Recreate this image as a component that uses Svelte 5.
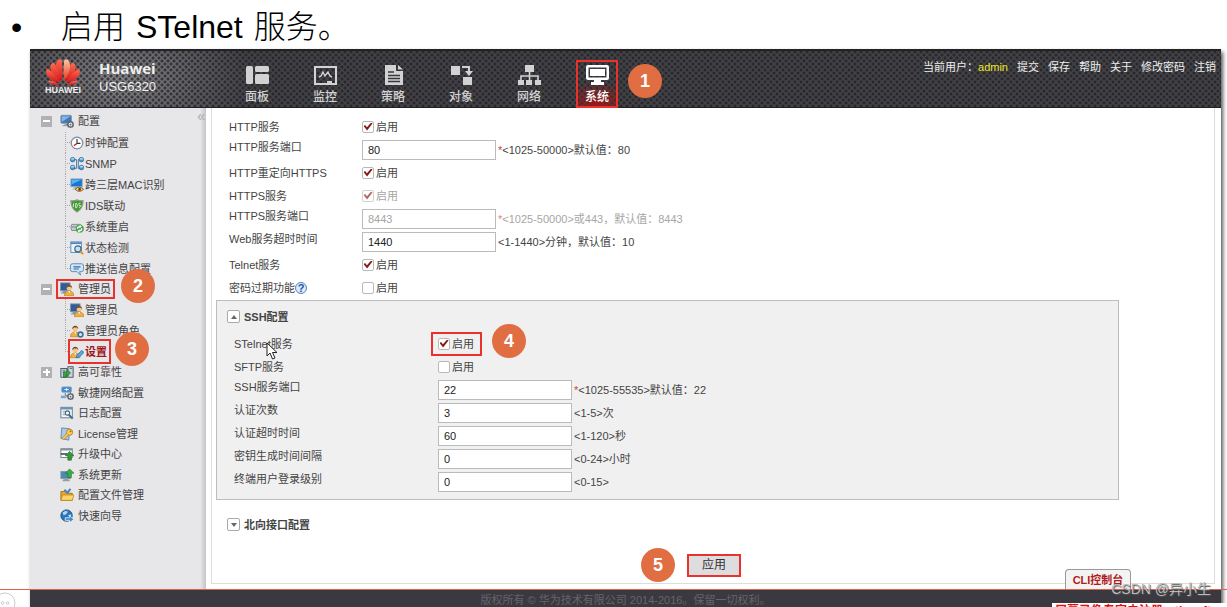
<script lang="ts">
  type Leaf = { label: string; icon: string; step?: number };
  type Node = Leaf & { open?: boolean; children?: Leaf[] };
  type Field = {
    id: string;
    label: string;
    kind: 'check' | 'text';
    value?: string;
    checked?: boolean;
    disabled?: boolean;
    required?: boolean;
    hint?: string;
    help?: boolean;
    cursor?: boolean;
    step?: number;
  };

  const nav: Leaf[] = [
    { label: '面板', icon: 'dashboard' },
    { label: '监控', icon: 'monitor' },
    { label: '策略', icon: 'policy' },
    { label: '对象', icon: 'object' },
    { label: '网络', icon: 'network' },
    { label: '系统', icon: 'system', step: 1 },
  ];

  const userLinks = ['提交', '保存', '帮助', '关于', '修改密码', '注销'];

  const tree: Node[] = [
    {
      label: '配置', icon: 'config', open: true,
      children: [
        { label: '时钟配置', icon: 'clock' },
        { label: 'SNMP', icon: 'snmp' },
        { label: '跨三层MAC识别', icon: 'mac' },
        { label: 'IDS联动', icon: 'shield' },
        { label: '系统重启', icon: 'restart' },
        { label: '状态检测', icon: 'inspect' },
        { label: '推送信息配置', icon: 'message' },
      ],
    },
    {
      label: '管理员', icon: 'admin', open: true, step: 2,
      children: [
        { label: '管理员', icon: 'admin' },
        { label: '管理员角色', icon: 'role' },
        { label: '设置', icon: 'settings', step: 3 },
      ],
    },
  ];

  const rest: Node[] = [
    { label: '高可靠性', icon: 'ha', open: false },
    { label: '敏捷网络配置', icon: 'agile' },
    { label: '日志配置', icon: 'log' },
    { label: 'License管理', icon: 'license' },
    { label: '升级中心', icon: 'upgrade' },
    { label: '系统更新', icon: 'update' },
    { label: '配置文件管理', icon: 'folder' },
    { label: '快速向导', icon: 'wizard' },
  ];

  const webFields: Field[] = [
    { id: 'http', label: 'HTTP服务', kind: 'check', checked: true },
    { id: 'http-port', label: 'HTTP服务端口', kind: 'text', value: '80', required: true, hint: '<1025-50000>默认值：80' },
    { id: 'redirect', label: 'HTTP重定向HTTPS', kind: 'check', checked: true },
    { id: 'https', label: 'HTTPS服务', kind: 'check', checked: true, disabled: true },
    { id: 'https-port', label: 'HTTPS服务端口', kind: 'text', value: '8443', disabled: true, required: true, hint: '<1025-50000>或443，默认值：8443' },
    { id: 'web-timeout', label: 'Web服务超时时间', kind: 'text', value: '1440', hint: '<1-1440>分钟，默认值：10' },
    { id: 'telnet', label: 'Telnet服务', kind: 'check', checked: true },
    { id: 'pwd-expire', label: '密码过期功能', kind: 'check', help: true },
  ];

  const sshFields: Field[] = [
    { id: 'stelnet', label: 'STelnet服务', kind: 'check', checked: true, cursor: true, step: 4 },
    { id: 'sftp', label: 'SFTP服务', kind: 'check' },
    { id: 'ssh-port', label: 'SSH服务端口', kind: 'text', value: '22', required: true, hint: '<1025-55535>默认值：22' },
    { id: 'auth-retry', label: '认证次数', kind: 'text', value: '3', hint: '<1-5>次' },
    { id: 'auth-timeout', label: '认证超时时间', kind: 'text', value: '60', hint: '<1-120>秒' },
    { id: 'key-interval', label: '密钥生成时间间隔', kind: 'text', value: '0', hint: '<0-24>小时' },
    { id: 'user-level', label: '终端用户登录级别', kind: 'text', value: '0', hint: '<0-15>' },
  ];
</script>

{#snippet badge(n: number)}
  <span class="badge">{n}</span>
{/snippet}

{#snippet navIcon(name: string)}
  <svg class="nav-icon" viewBox="0 0 24 22" fill="currentColor" aria-hidden="true">
    {#if name === 'dashboard'}
      <rect x="1" y="2" width="7" height="18" rx="1.5" />
      <rect x="10" y="2" width="14" height="6" rx="1.5" />
      <rect x="10" y="10" width="14" height="10" rx="1.5" />
    {:else if name === 'monitor'}
      <path d="M1 2h23v19H1zM3 4v15h11v-2h5v2h3V4z" fill-rule="evenodd" />
      <path d="M6 13l2-1 2-4 2 4 3-4 2 4 2 1" fill="none" stroke="currentColor" stroke-width="1.4" />
    {:else if name === 'policy'}
      <path d="M4 1h11v6h7v14H4z" />
      <path d="M17 1l5 4.500h-5z" />
      <path d="M7 8h6M7 11.500h12M7 14.500h12M7 17.500h12" stroke="#38373c" stroke-width="1.3" />
    {:else if name === 'object'}
      <rect x="2" y="2" width="9" height="9" />
      <rect x="14" y="13" width="9" height="8" />
      <path d="M13 3h7v5" fill="none" stroke="currentColor" stroke-width="2" />
      <path d="M16 7h8l-4 5z" />
    {:else if name === 'network'}
      <rect x="8" y="1" width="9" height="7" />
      <rect x="1" y="16" width="6" height="5" />
      <rect x="9" y="16" width="6" height="5" />
      <rect x="18" y="16" width="6" height="5" />
      <path d="M12.500 8v8M4 16v-4h17v4" fill="none" stroke="currentColor" stroke-width="1.6" />
    {:else}
      <path d="M3 1h19q2 0 2 2v11q0 2-2 2H3q-2 0-2-2V3q0-2 2-2zM3.500 3.500v10h18v-10z" fill-rule="evenodd" />
      <path d="M5 5h15v7H5zM9 16h7v2h3v3H6v-3h3z" />
    {/if}
  </svg>
{/snippet}

{#snippet person()}
  <circle cx="9" cy="6" r="3" fill="#f5c48d" />
  <path d="M5.600 6.500C5 1.500 12.500 1 12.500 6.500L11 4.500H7.500z" fill="#7a4514" />
  <path d="M3.500 15q0-5 5.500-5.500 5.500.5 5.500 5.500z" fill="#edb23c" stroke="#b37718" stroke-width=".7" />
  <path d="M8 9.500l1 2.500 1-2.500z" fill="#fff" />
{/snippet}

{#snippet pc()}
  <rect x="1" y="1.500" width="12" height="9" rx="1" fill="#3f78b5" stroke="#7c93a8" />
  <path d="M2 2.500h10L2 9z" fill="#82b5e6" />
  <path d="M5 11h4v1.500h2V14H3v-1.500h2z" fill="#9aa5b0" />
{/snippet}

{#snippet gear()}
  <circle cx="12" cy="12" r="3" fill="#e5e8eb" stroke="#59636c" stroke-width="1.500" />
  <path d="M12 7.500v1.500M12 15v1M7.500 12H9M15 12h1M9 9l1 1M14 14l1 1M15 9l-1 1M9 15l1-1" stroke="#59636c" stroke-width="1.300" />
  <circle cx="12" cy="12" r="1" fill="#59636c" />
{/snippet}

{#snippet treeIcon(name: string)}
  <svg class="tree-icon" viewBox="0 0 16 16" aria-hidden="true">
    {#if name === 'config'}
      {@render pc()}
      {@render gear()}
    {:else if name === 'clock'}
      <circle cx="8" cy="8" r="6.600" fill="#fff" stroke="#7f8ca3" stroke-width="1.400" />
      <path d="M8 3.500V8.500H12" fill="none" stroke="#333" stroke-width="1.300" />
      <path d="M8 8.500L4.500 11" stroke="#c22" stroke-width="1.500" />
    {:else if name === 'snmp'}
      <path d="M4 3h3.500v10H4M12 3H9.500v10H12" fill="none" stroke="#456f96" />
      {#each [[3, 3], [3, 12], [13, 3], [13, 12]] as [cx, cy]}
        <rect x={cx - 2.5} y={cy - 2.5} width="5" height="5" rx="2" fill="#4593ce" stroke="#225c8e" stroke-width=".7" />
        <ellipse {cx} cy={cy - 1} rx="2" ry="1" fill="#afdaf6" />
      {/each}
    {:else if name === 'mac'}
      <rect x="1" y="1" width="13" height="9" fill="#1777d2" stroke="#9badbe" />
      <path d="M2 2h11L2 7z" fill="#59b2f5" />
      <path d="M5 10h4v3H3v-1h2z" fill="#a4abb2" />
      <path d="M6 13q4.500-5 9.500 0-5 4.500-9.500 0z" fill="#f3d68d" stroke="#7a4d16" />
      <circle cx="11" cy="13" r="1.500" fill="#5b330c" />
    {:else if name === 'shield'}
      <path d="M8 1q3 1.500 7 1-.3 9-7 13-6.700-4-7-13 4 .5 7-1z" fill="#3f9a2e" stroke="#909a8b" stroke-width="1.300" />
      <path d="M4 5v4M6.500 5v5h1q2-2.500 0-5zM12 5q-2-1-2 1t2 1.500-2 2.500" fill="none" stroke="#e6f5df" />
    {:else if name === 'restart'}
      <path d="M2 5h10l3 3v4H2q-2-3 0-7z" fill="#c8ccd0" stroke="#7c8489" />
      <path d="M2 8h5" stroke="#70787e" />
      <circle cx="11" cy="10" r="4.500" fill="#48a547" />
      <path d="M8.500 10q0-2.500 3-2.500M13.500 9.500q0 3-3 3" fill="none" stroke="#fff" stroke-width="1.400" />
      <path d="M11 5.500l2.500 2-2.500 2zM11 10.500l-2.500 2 2.500 2z" fill="#fff" />
    {:else if name === 'inspect'}
      <rect x="1" y="1" width="12" height="12" fill="#eef6fe" stroke="#4d83bd" />
      <path d="M1 2.500h12" stroke="#4d83bd" stroke-width="2" />
      <circle cx="9" cy="9" r="3.500" fill="#bfe2f7" stroke="#47637e" stroke-width="1.300" />
      <path d="M11.500 11.500L15 15" stroke="#d59420" stroke-width="2.200" />
    {:else if name === 'message'}
      <path d="M3 2h10q2.500 0 2.500 2.500v4Q15.500 11 13 11h-2l1 4-4-4H3Q.5 11 .5 8.500v-4Q.5 2 3 2z" fill="#cfe6f8" stroke="#5482ad" />
      <path d="M4 5.500h8M4 8h6" stroke="#356b9f" stroke-width="1.300" />
    {:else if name === 'admin'}
      <rect x="0.500" y="1" width="11" height="9" fill="#2f5b99" stroke="#8195aa" />
      <path d="M3 10h4v3H1v-1h2z" fill="#8795a3" />
      <g transform="translate(1.500 .8)">{@render person()}</g>
    {:else if name === 'role'}
      <g transform="translate(-3 -.5)">{@render person()}</g>
      <circle cx="12" cy="12" r="2.700" fill="#d4e9f8" stroke="#35719f" stroke-width="1.800" />
    {:else if name === 'settings'}
      <g transform="translate(-3 -.5)">{@render person()}</g>
      <path d="M7 14.500l1-3L13.500 6 16 8.500 10.500 14z" fill="#58a5dc" stroke="#28689c" stroke-width=".8" />
    {:else if name === 'ha'}
      <rect x="1" y="4" width="7" height="10" fill="#cbd4dd" stroke="#394d63" />
      <rect x="9" y="2" width="6" height="12" fill="#cbd4dd" stroke="#394d63" />
      <path d="M3 6h3M3 8h3M11 4h3" stroke="#53697e" />
      <path d="M4 14V8h4V5l4 4-4 4v-2H7v3z" fill="#3ca23a" stroke="#176a1d" stroke-width=".7" />
    {:else if name === 'agile'}
      <rect x="2" y="1" width="11" height="6" rx="1" fill="#3f89d1" stroke="#86a1ba" />
      <path d="M5 4h5M7.500 2.500v3" stroke="#fff" />
      <path d="M6 8v3h4M2 13h5" stroke="#577086" fill="none" />
      <rect x="1" y="11" width="5" height="3" fill="#71a7d6" />
      {@render gear()}
    {:else if name === 'log'}
      <rect x="1" y="1.500" width="13" height="12" fill="#f3f8fc" stroke="#58718a" />
      <path d="M1 3h13" stroke="#7091ae" stroke-width="2" />
      <path d="M3 6h3M3 8h2M3 10h3" stroke="#8fa1b2" />
      <circle cx="8.500" cy="8" r="2.500" fill="none" stroke="#45687f" stroke-width="1.300" />
      <path d="M10 10l4.500 4.500" stroke="#45687f" stroke-width="2.200" />
    {:else if name === 'license'}
      <path d="M2 1l9 1-1 13-9-2z" fill="#a7c9ec" stroke="#5c86b5" />
      <circle cx="11" cy="6" r="3.500" fill="#ffd155" stroke="#bb7f13" />
      <path d="M9 8l-6 6" stroke="#c98918" stroke-width="3.500" />
      <path d="M9 8l-5.500 5.500" stroke="#ffd155" stroke-width="1.800" />
      <circle cx="12" cy="5" r="1" fill="#91600d" />
    {:else if name === 'upgrade'}
      <rect x="1" y="2" width="13" height="10" fill="#fff" stroke="#697984" />
      <path d="M1 3h13" stroke="#81929d" stroke-width="2" />
      <path d="M1 8h7" stroke="#222" stroke-width="1.500" />
      <path d="M11 5l5 5h-3v5H9v-5H6z" fill="#2e9a3b" stroke="#17651f" stroke-width=".7" />
    {:else if name === 'update'}
      <rect x="1" y="4" width="11" height="8" fill="#4d89b6" stroke="#84949f" />
      <path d="M5 12h4v1h2v2H3v-2h2z" fill="#929da5" />
      <path d="M11 1l5 5h-3v5H9V6H6z" fill="#3bac4b" stroke="#1c762b" stroke-width=".7" />
    {:else if name === 'folder'}
      <path d="M1 4h5l1 2h7v8H1z" fill="#e9a72a" stroke="#a66f0e" />
      <path d="M5 2l4 4M12 1L8 6" stroke="#4889bf" stroke-width="2.400" />
      <path d="M1 14l2-6h13l-2 6z" fill="#ffd469" stroke="#bc8018" stroke-width=".8" />
    {:else}
      <circle cx="7.500" cy="7.500" r="6.500" fill="#2b75ba" stroke="#174b82" />
      <path d="M3 4q3-3 6-1l-2 3-3 1zM9 7l4-1-1 4z" fill="#b2daf4" />
      <path d="M6 10h5V7.500l5 4.500-5 3.500V13H6z" fill="#408dc9" stroke="#fff" stroke-width=".8" />
    {/if}
  </svg>
{/snippet}

{#snippet branch(node: Node)}
  <div class="head">
    {#if node.open !== undefined}
      <button class="toggle" class:plus={!node.open} aria-label={node.label}></button>
    {:else}
      <span class="toggle-space"></span>
    {/if}
    <a href="#top" class:boxed={node.step}>
      {@render treeIcon(node.icon)}<span>{node.label}</span>
      {#if node.step}{@render badge(node.step)}{/if}
    </a>
  </div>
{/snippet}

{#snippet row(f: Field)}
  <div class="row" class:disabled={f.disabled}>
    <label class="name" class:raised={f.kind === 'text'} for={f.id}>
      {f.label}
      {#if f.help}<span class="help">?</span>{/if}
      {#if f.cursor}
        <svg class="cursor" viewBox="0 0 12 18" aria-hidden="true">
          <path d="M1 1v13l3-3 2.500 6 2.500-1-2.500-5.500H11z" fill="#fff" stroke="#222" />
        </svg>
      {/if}
    </label>
    {#if f.kind === 'check'}
      <label class="check" class:boxed={f.step}>
        <input id={f.id} type="checkbox" checked={f.checked} disabled={f.disabled} />启用
        {#if f.step}{@render badge(f.step)}{/if}
      </label>
    {:else}
      <input id={f.id} class="text" type="text" value={f.value} disabled={f.disabled} />
      <span class="hint">{#if f.required}<i>*</i>{/if}{f.hint}</span>
    {/if}
  </div>
{/snippet}

<div class="page" id="top">
  <h1>
    <span class="dot">•</span>
    <span>启用</span>
    <span>STelnet</span>
    <span>服务。</span>
  </h1>

  <div class="app">
    <header>
      <div class="brand">
        <div class="logo">
          <svg viewBox="0 0 36 28" aria-hidden="true">
            <defs>
              <linearGradient id="petal" x1="0" y1="0" x2="0" y2="1">
                <stop offset="0" stop-color="#ff6a50" />
                <stop offset="1" stop-color="#d3141a" />
              </linearGradient>
              <linearGradient id="shine" x1="0" y1="0" x2="0" y2="1">
                <stop offset="0" stop-color="#ffc9a4" />
                <stop offset="1" stop-color="#e4331f" />
              </linearGradient>
            </defs>
            <g fill="url(#petal)">
              <path d="M17 23C11 15 9 6 13 2q3-2 4 1 1 9 0 20z" />
              <path d="M16 24C7 18 4 12 6 6q2-2 4 0 4 8 6 18z" />
              <path d="M15 25Q2 22 1 14q0-3 2-3 7 4 12 14z" />
              <path d="M14 26.500q-8 2-11-3.500 5-1 11 3.500z" />
              <path d="M20 24c9-6 12-12 10-18q-2-2-4 0-4 8-6 18z" />
              <path d="M21 25q13-3 14-11 0-3-2-3-7 4-12 14z" />
              <path d="M22 26.500q8 2 11-3.500-5-1-11 3.500z" />
            </g>
            <path d="M19 23c6-8 8-17 4-21q-3-2-4 1-1 9 0 20z" fill="url(#shine)" />
          </svg>
          <span>HUAWEI</span>
        </div>
        <div class="product">
          <strong>Huawei</strong>
          <span>USG6320</span>
        </div>
      </div>
      <nav class="main-nav">
        {#each nav as item}
          <a href="#top" class:boxed={item.step} class:active={item.step}>
            {@render navIcon(item.icon)}
            <span>{item.label}</span>
            {#if item.step}{@render badge(item.step)}{/if}
          </a>
        {/each}
      </nav>
      <div class="user">
        <span>当前用户：<b>admin</b></span>
        {#each userLinks as link}<a href="#top">{link}</a>{/each}
      </div>
    </header>

    <div class="body">
      <aside>
        <button class="collapse" aria-label="collapse">«</button>
        {#each tree as node}
          {@render branch(node)}
          <ul>
            {#each node.children ?? [] as leaf}
              <li>
                <a href="#top" class:boxed={leaf.step} class:current={leaf.step}>
                  {@render treeIcon(leaf.icon)}<span>{leaf.label}</span>
                  {#if leaf.step}{@render badge(leaf.step)}{/if}
                </a>
              </li>
            {/each}
          </ul>
        {/each}
        <div class="rest">
          {#each rest as node}{@render branch(node)}{/each}
        </div>
      </aside>

      <main>
        <div class="panel">
          <div class="web">
            {#each webFields as f}{@render row(f)}{/each}
          </div>
          <section class="open">
            <h2><button class="fold up" aria-label="SSH配置"></button>SSH配置</h2>
            {#each sshFields as f}{@render row(f)}{/each}
          </section>
          <section class="closed">
            <h2><button class="fold" aria-label="北向接口配置"></button>北向接口配置</h2>
          </section>
          <div class="actions">
            {@render badge(5)}
            <button class="apply boxed">应用</button>
          </div>
        </div>
        <button class="cli">CLI控制台</button>
      </main>
    </div>

    <footer>版权所有 © 华为技术有限公司 2014-2016。保留一切权利。</footer>
  </div>

  <div class="rule"></div>
  <svg class="more" viewBox="0 0 16 16" aria-hidden="true">
    <circle cx="5" cy="12" r="10" fill="none" stroke="#ccc" />
    <g fill="none" stroke="#ccc"><circle cx="2.500" cy="12" r="1.300" /><circle cx="7.500" cy="12" r="1.300" /></g>
  </svg>
  <div class="recorder">屏幕录像专家未注册，tlxsoft.com</div>
  <div class="watermark">CSDN @异小生</div>
</div>

<style>
  :global(body) { background: #fff; }
  .page {
    position: relative;
    overflow: hidden;
    font-family: "Liberation Sans", "Noto Sans CJK SC", sans-serif;
    font-size: 11px;
    line-height: 16px;
    color: #444;
  }
  a { color: inherit; text-decoration: none; }
  button, input { font: inherit; margin: 0; padding: 0; }
  h1 {
    display: flex;
    gap: 11px;
    margin: 0;
    padding-left: 11px;
    height: 49px;
    line-height: 54px;
    font-size: 32px;
    font-weight: 300;
    color: #000;
  }
  .dot { width: 39px; }
  .app { margin: 0 6px 0 30px; box-shadow: 2px 3px 4px #555; }

  .badge {
    display: block;
    flex: none;
    width: 34px;
    height: 34px;
    border-radius: 50%;
    background: #e16e43;
    color: #fff;
    font-size: 18px;
    font-weight: bold;
    line-height: 34px;
    text-align: center;
  }
  a .badge, .check .badge {
    position: absolute;
    z-index: 2;
    left: 100%;
    top: 50%;
    margin: -20px 0 0 10px;
  }
  aside a .badge { margin-left: 6px; }
  .boxed { position: relative; outline: 2px solid #e8322b; outline-offset: -2px; }

  header {
    display: flex;
    height: 59px;
    color: #eee;
    background:
      radial-gradient(circle, rgb(30 29 33 / 0.7) 1px, transparent 2px) 0 0 / 6px 6px,
      radial-gradient(circle, rgb(30 29 33 / 0.7) 1px, transparent 2px) 3px 3px / 6px 6px,
      radial-gradient(ellipse 130px 80px at 90px 30px, #858588, #434247);
    box-shadow: inset 0 2px 1px #222, inset 0 -1px #222;
  }
  .brand { display: flex; gap: 18px; width: 192px; box-sizing: border-box; padding: 9px 0 0 15px; }
  .logo { display: flex; flex-direction: column; align-items: center; width: 36px; }
  .logo svg { width: 36px; height: 28px; }
  .logo span { font-size: 9px; font-weight: bold; line-height: 9px; }
  .product { display: flex; flex-direction: column; }
  .product strong { font: bold 15px/20px "Open Sans", sans-serif; }
  .product span { font-size: 13px; line-height: 17px; }
  .main-nav { display: flex; gap: 26px; padding: 11px 0 0 14px; }
  .main-nav a {
    display: flex;
    flex-direction: column;
    align-items: center;
    width: 42px;
    height: 48px;
    padding-top: 4px;
    box-sizing: border-box;
    color: #d2d2d2;
    font-size: 12px;
    font-weight: 500;
  }
  .main-nav a > span:not(.badge) { margin-top: 3px; }
  .main-nav .active { color: #fff; background: radial-gradient(ellipse 34px 22px at 50% 90%, #9c1719, transparent); }
  .nav-icon { width: 24px; height: 22px; }
  .user { display: flex; gap: 9px; margin-left: auto; padding: 10px 5px 0 0; white-space: nowrap; }
  .user b { color: #ece527; font-weight: normal; }

  .body { display: flex; }
  aside {
    position: relative;
    flex: none;
    width: 176px;
    box-sizing: border-box;
    padding-top: 2px;
    background: linear-gradient(to right, transparent 170px, #c4c3c6), #e7e6e9;
  }
  .collapse {
    position: absolute;
    right: 1px;
    top: 0;
    border: 0;
    background: none;
    color: #aaa;
    font-size: 14px;
  }
  .head { display: flex; align-items: center; padding-left: 11px; gap: 4px; height: 20px; }
  .collapse + .head { height: 22px; }
  .head a { display: flex; align-items: center; gap: 4px; height: 20px; padding: 0 4px; }
  .toggle, .toggle-space { flex: none; width: 11px; height: 11px; }
  .toggle {
    border: 0;
    background:
      linear-gradient(#fff, #fff) center / 7px 2px no-repeat,
      #b1b0b3;
  }
  .toggle.plus {
    background:
      linear-gradient(#fff, #fff) center / 7px 2px no-repeat,
      linear-gradient(#fff, #fff) center / 2px 7px no-repeat,
      #b1b0b3;
  }
  .tree-icon { flex: none; width: 14px; height: 14px; }
  ul { list-style: none; margin: 0 0 0 35px; padding: 0; }
  li {
    display: flex;
    height: 21px;
    padding-left: 5px;
    background:
      repeating-linear-gradient(#aaa 0 1px, transparent 1px 2px) 0 0 / 1px 100% no-repeat,
      repeating-linear-gradient(to right, #aaa 0 1px, transparent 1px 2px) 0 50% / 5px 1px no-repeat;
  }
  li:last-child {
    background:
      repeating-linear-gradient(#aaa 0 1px, transparent 1px 2px) 0 0 / 1px 50% no-repeat,
      repeating-linear-gradient(to right, #aaa 0 1px, transparent 1px 2px) 0 50% / 5px 1px no-repeat;
  }
  li a { display: flex; align-items: center; gap: 1px; padding-right: 2px; white-space: nowrap; }
  li .boxed { outline-offset: 0; }
  .current { color: #a01418; font-weight: bold; }
  .rest { display: grid; min-height: 164px; align-items: center; }

  main { position: relative; flex: 1; padding: 0 6px 5px 5px; background: #fff; }
  .panel { padding-top: 7px; border: 1px solid #ddd; border-top: 0; }
  .web { padding-left: 17px; }
  .row { display: flex; align-items: center; height: 23px; }
  .name { position: relative; flex: none; width: 133px; }
  section .name { width: 204px; }
  .name.raised { padding-bottom: 5px; }
  .help {
    display: inline-block;
    width: 10px;
    height: 10px;
    margin-left: -3px;
    border: 1px solid #5a82bd;
    border-radius: 50%;
    background: #dceafa;
    color: #2456a5;
    font-weight: bold;
    line-height: 10px;
    text-align: center;
  }
  .cursor { position: absolute; left: 32px; top: 6px; width: 12px; height: 18px; }
  .check { display: flex; align-items: center; gap: 2px; }
  .check.boxed { height: 24px; margin-left: -7px; padding: 0 8px 0 7px; }
  .check input {
    appearance: none;
    display: grid;
    place-content: center;
    width: 12px;
    height: 12px;
    box-sizing: border-box;
    border: 1px solid #b9b9b9;
    border-radius: 2px;
    background: #fff;
  }
  .check input:checked::before {
    content: "";
    width: 9px;
    height: 8px;
    background: #8c1a17;
    clip-path: polygon(0 45%, 18% 30%, 38% 60%, 85% 0, 100% 12%, 40% 100%);
  }
  .text {
    width: 134px;
    height: 20px;
    box-sizing: border-box;
    padding-left: 5px;
    border: 1px solid #bbb;
    background: #fff;
    color: #222;
  }
  .hint { margin-left: 2px; }
  .hint i { color: #d43c3c; font-style: normal; }
  .disabled .check, .disabled .hint, .disabled .text { color: #a6a6a6; }
  .disabled .check input, .disabled .hint i { opacity: 0.65; }

  section { margin: 1px 95px 0 4px; padding: 0 0 6px 17px; border: 1px solid #bdbdbf; background: #f1f0f1; }
  section.closed { margin-top: 8px; padding-bottom: 0; border-color: transparent; background: none; }
  h2 { display: flex; align-items: center; gap: 4px; height: 31px; margin: 0 0 0 -7px; font-size: 11px; }
  .fold {
    display: grid;
    place-content: center;
    width: 13px;
    height: 13px;
    border: 1px solid #aaa;
    border-radius: 2px;
    background: #fff;
  }
  .fold::before { content: ""; border: 3px solid transparent; border-top: 4px solid #666; border-bottom: 0; }
  .fold.up::before { border-top: 0; border-bottom: 4px solid #666; }
  .actions { display: flex; justify-content: center; align-items: center; gap: 12px; padding: 7px 44px 1px 0; }
  .apply { width: 54px; height: 23px; border: 0; background: #dddcde; color: #333; font-size: 12px; }
  .cli {
    position: absolute;
    right: 90px;
    bottom: 0;
    width: 66px;
    height: 20px;
    border: 1px solid #999;
    border-bottom: 0;
    border-radius: 4px 4px 0 0;
    background: #f4f3f4;
    color: #b01c1c;
    font-weight: bold;
    white-space: nowrap;
  }
  footer { height: 18px; line-height: 22px; background: #3b3940; color: #66646a; text-align: center; }

  .rule { position: absolute; z-index: 1; left: 0; right: 0; bottom: 17px; height: 1px; background: #e0604c; }
  .more { position: absolute; left: 0; bottom: 0; width: 16px; height: 16px; }
  .recorder {
    position: absolute;
    right: 0;
    bottom: 0;
    width: 172px;
    height: 4px;
    padding-left: 3px;
    overflow: hidden;
    background: #fff;
    color: #e01010;
    font-size: 12px;
    font-weight: bold;
    white-space: nowrap;
  }
  .watermark {
    position: absolute;
    z-index: 2;
    right: 16px;
    bottom: 10px;
    color: #bbb;
    font-size: 14px;
    text-shadow: 1px 1px 1px #555;
  }
</style>
